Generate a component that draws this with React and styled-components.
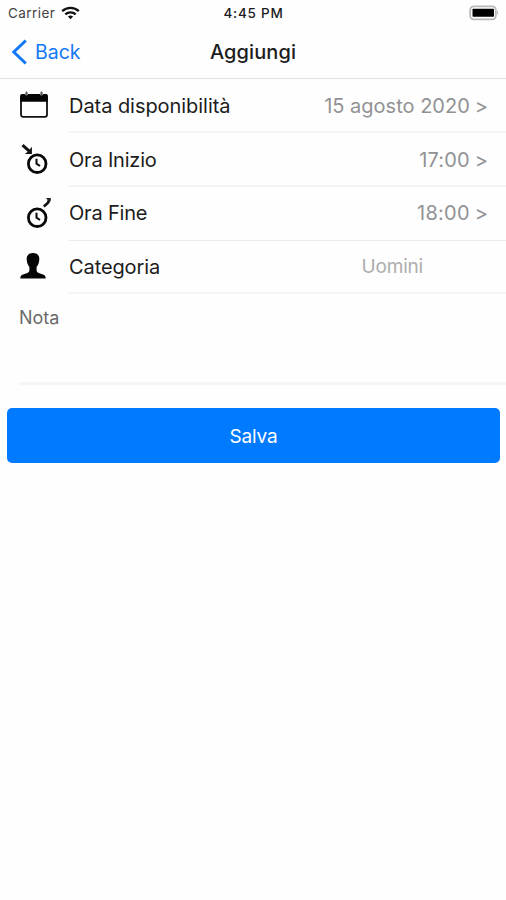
import React from "react";
import styled, { createGlobalStyle } from "styled-components";

const GlobalStyle = createGlobalStyle`
  * { box-sizing: border-box; }
  body { margin: 0; background: #fff; }
`;

const Screen = styled.main`
  width: 506px;
  height: 900px;
  background: #fefefe;
  color: #1c1c1c;
  font-family: Inter, "Liberation Sans", sans-serif;
  overflow: hidden;
`;

const StatusBar = styled.div`
  height: 26px;
  padding: 0 7px 0 8px;
  display: grid;
  grid-template-columns: 1fr auto 1fr;
  align-items: center;
`;

const Carrier = styled.div`
  display: flex;
  align-items: center;
  gap: 6px;
`;

const BatterySlot = styled.div`
  display: flex;
  justify-content: flex-end;
`;

const NavBar = styled.header`
  height: 53px;
  padding: 0 11px;
  display: grid;
  grid-template-columns: 1fr auto 1fr;
  align-items: center;
  border-bottom: 1px solid #e3e3e3;
`;

const BackButton = styled.button`
  display: flex;
  align-items: center;
  gap: 8px;
  padding: 0;
  border: 0;
  background: none;
  color: #1478f6;
  font-family: inherit;
`;

const Text = styled.span`
  display: block;
  white-space: nowrap;
  font-size: ${(p) => p.$size || 20}px;
  font-weight: ${(p) => p.$weight || 400};
  letter-spacing: ${(p) => p.$track || 0}px;
  color: ${(p) => p.$color || "inherit"};
  line-height: 1.2;
`;

const BackLabel = styled(Text)`
  padding-top: 2px;
`;

const Row = styled.div`
  height: ${(p) => p.$height || 54}px;
  padding-left: 19px;
  display: flex;
`;

const IconCell = styled.div`
  width: 50px;
  flex: none;
  display: flex;
  align-items: center;
  padding-bottom: 3px;
`;

const RowBody = styled.div`
  flex: 1;
  display: flex;
  align-items: center;
  justify-content: space-between;
  padding-top: ${(p) => (p.$thin ? 0 : 1)}px;
  padding-bottom: ${(p) => (p.$thin ? 1 : 0)}px;
  padding-right: ${(p) => p.$inset || 18}px;
  border-bottom: ${(p) => (p.$thin ? "1px solid #ececec" : "2px solid #f5f5f5")};
`;

const Value = styled.div`
  display: flex;
  align-items: center;
  gap: 5px;
  color: #929294;
`;

const CategoryValue = styled(Text)`
  padding-top: 1px;
`;

const Note = styled.section`
  height: 91px;
  margin-left: 19px;
  padding-top: 13px;
  border-bottom: 3px solid #f6f6f6;
`;

const SaveButton = styled.button`
  display: flex;
  align-items: center;
  justify-content: center;
  width: 493px;
  height: 55px;
  margin: 23px 0 0 7px;
  padding: 3px 0 0;
  border: 0;
  border-radius: 5px;
  background: #007aff;
  color: #fff;
  font-family: inherit;
`;

const WifiIcon = () => (
  <svg width="19" height="14" viewBox="0 0 19 14" fill="none" stroke="#111" strokeWidth="2.3">
    <path d="M1.2 5.1C5.8 .7 13.2 .7 17.8 5.1" />
    <path d="M4.3 8.3C7.2 5.6 11.8 5.6 14.7 8.3" />
    <path d="M9.5 13.2 6.9 10.6Q9.5 8.6 12.1 10.6Z" fill="#111" stroke="none" />
  </svg>
);

const BatteryIcon = () => (
  <svg width="30" height="16" viewBox="0 0 30 16">
    <rect x="1.2" y="1.3" width="25.6" height="13" rx="3.5" fill="#fff" stroke="#b9b9b9" strokeWidth="1.8" />
    <rect x="3.5" y="3.8" width="21.5" height="8" rx=".8" fill="#000" />
    <path d="M28 5.6Q30 7.8 28 10Z" fill="#aaa" />
  </svg>
);

const ChevronIcon = () => (
  <svg width="16" height="26" viewBox="0 0 16 26" fill="none" stroke="#1478f6" strokeWidth="3">
    <path d="M14.8 1.5 2.8 13l12 11.5" />
  </svg>
);

const CalendarIcon = () => (
  <svg width="30" height="28" viewBox="0 0 30 28">
    <rect x="2" y="4" width="26" height="21.8" rx="2" fill="#fff" stroke="#111" strokeWidth="1.8" />
    <path d="M1.2 10.8V5q0-2 2-2h23.600q2 0 2 2v5.800Z" fill="#050505" />
    <path d="M7.500 2.500v1.500M22.500 2.500v1.500" stroke="#bbb" strokeWidth="3.200" />
    <path d="M7.500 1.500v2.500M22.500 1.500v2.500" stroke="#555" strokeWidth="2" strokeLinecap="round" />
  </svg>
);

const ClockFace = () => (
  <g fill="none" stroke="#080808">
    <circle cx="18.200" cy="21.700" r="8.800" strokeWidth="2.800" />
    <path d="M17.500 16.700v5l3.500 2.300" strokeWidth="2" />
  </g>
);

const StartIcon = () => (
  <svg width="32" height="34" viewBox="0 0 32 34">
    <ClockFace />
    <path d="M3.500 3.200 10.800 9.600" stroke="#111" strokeWidth="3" />
    <path d="M12.900 4.800V12H5.800L8.500 9.900 10.500 7.800Z" fill="#111" />
  </svg>
);

const EndIcon = () => (
  <svg width="32" height="34" viewBox="0 0 32 34">
    <ClockFace />
    <path d="M24.800 10.400 28.800 7 30.300 3.500" stroke="#111" strokeWidth="2.600" fill="none" />
    <path d="M27 2H32L31 7 29 4.500Z" fill="#222" />
  </svg>
);

const PersonIcon = () => (
  <svg width="28" height="28" viewBox="0 0 28 28">
    <path
      d="M14 1c-4.500 0-6.600 2.800-6.300 6.500.1 1.300.3 2.900.8 4.200.5 1.300 1.300 2.500 1.900 3.300v3.200c0 1.400-1 2.300-2.700 3L4 22.500c-1.900.7-2.700 1.900-2.700 4h25.400c0-2.100-.8-3.300-2.700-4l-3.700-1.300c-1.700-.7-2.700-1.600-2.700-3V15c.6-.8 1.400-2 1.900-3.300.5-1.300.7-2.900.8-4.200C20.600 3.800 18.500 1 14 1Z"
      fill="#050505"
    />
  </svg>
);

const fields = [
  { icon: CalendarIcon, label: "Data disponibilità", value: "15 agosto 2020", track: 0, labelTrack: -0.05 },
  { icon: StartIcon, label: "Ora Inizio", value: "17:00", track: 0.15, labelTrack: -0.2 },
  { icon: EndIcon, label: "Ora Fine", value: "18:00", track: 0.25, labelTrack: -0.2, thin: true },
];

export default function App() {
  return (
    <Screen>
      <GlobalStyle />
      <StatusBar>
        <Carrier>
          <Text $size={13.5} $track={0.45} $color="#444">Carrier</Text>
          <WifiIcon />
        </Carrier>
        <Text $size={13.5} $weight={500} $track={0.75}>4:45 PM</Text>
        <BatterySlot><BatteryIcon /></BatterySlot>
      </StatusBar>
      <NavBar>
        <BackButton>
          <ChevronIcon />
          <BackLabel $size={19.5}>Back</BackLabel>
        </BackButton>
        <Text $weight={500} $track={0.1}>Aggiungi</Text>
      </NavBar>
      {fields.map(({ icon: Icon, label, value, track, labelTrack, thin }) => (
        <Row key={label}>
          <IconCell><Icon /></IconCell>
          <RowBody $thin={thin}>
            <Text $track={labelTrack}>{label}</Text>
            <Value>
              <Text $track={track}>{value}</Text>
              <Text>&gt;</Text>
            </Value>
          </RowBody>
        </Row>
      ))}
      <Row $height={53}>
        <IconCell><PersonIcon /></IconCell>
        <RowBody $inset={83}>
          <Text $track={-0.1}>Categoria</Text>
          <CategoryValue $size={19} $track={-0.2} $color="#adadad">Uomini</CategoryValue>
        </RowBody>
      </Row>
      <Note>
        <Text $size={18} $color="#6a6a6a">Nota</Text>
      </Note>
      <SaveButton><Text $size={19} $track={-0.2}>Salva</Text></SaveButton>
    </Screen>
  );
}
